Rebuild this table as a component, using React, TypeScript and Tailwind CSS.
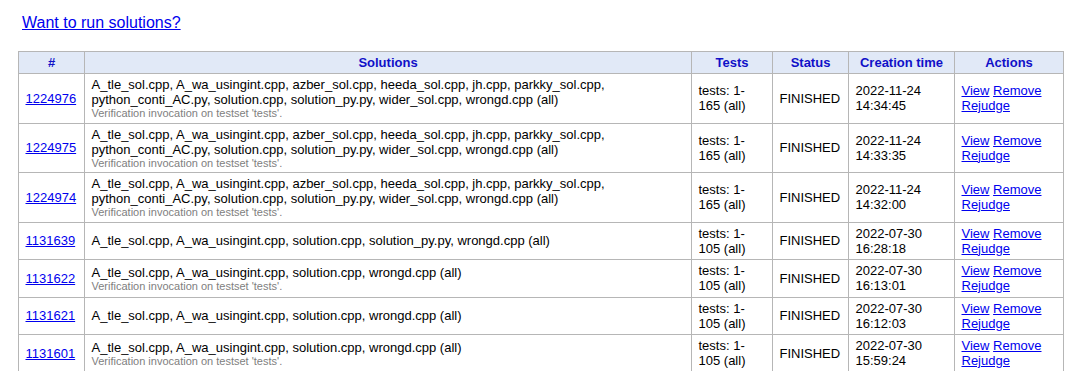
import React from 'react';

interface Run {
  id: string;
  solutions: string;
  note: boolean;
  tests: string;
  date: string;
  time: string;
}

const all11 =
  'A_tle_sol.cpp, A_wa_usingint.cpp, azber_sol.cpp, heeda_sol.cpp, jh.cpp, parkky_sol.cpp, python_conti_AC.py, solution.cpp, solution_py.py, wider_sol.cpp, wrongd.cpp (all)';

const runs: Run[] = [
  { id: '1224976', solutions: all11, note: true, tests: 'tests: 1-165 (all)', date: '2022-11-24', time: '14:34:45' },
  { id: '1224975', solutions: all11, note: true, tests: 'tests: 1-165 (all)', date: '2022-11-24', time: '14:33:35' },
  { id: '1224974', solutions: all11, note: true, tests: 'tests: 1-165 (all)', date: '2022-11-24', time: '14:32:00' },
  {
    id: '1131639',
    solutions: 'A_tle_sol.cpp, A_wa_usingint.cpp, solution.cpp, solution_py.py, wrongd.cpp (all)',
    note: false,
    tests: 'tests: 1-105 (all)',
    date: '2022-07-30',
    time: '16:28:18',
  },
  { id: '1131622', solutions: 'A_tle_sol.cpp, A_wa_usingint.cpp, solution.cpp, wrongd.cpp (all)', note: true, tests: 'tests: 1-105 (all)', date: '2022-07-30', time: '16:13:01' },
  { id: '1131621', solutions: 'A_tle_sol.cpp, A_wa_usingint.cpp, solution.cpp, wrongd.cpp (all)', note: false, tests: 'tests: 1-105 (all)', date: '2022-07-30', time: '16:12:03' },
  { id: '1131601', solutions: 'A_tle_sol.cpp, A_wa_usingint.cpp, solution.cpp, wrongd.cpp (all)', note: true, tests: 'tests: 1-105 (all)', date: '2022-07-30', time: '15:59:24' },
];

const th = 'border border-[#b6b6b6] px-[6.5px] py-[3px] text-center font-bold text-[#1010c8]';
const td = 'border border-[#b6b6b6] px-[6.5px] py-[3.25px] align-middle text-left';
const link = 'text-[#0000ee] underline';

export default function App() {
  return (
    <div className="min-h-[371px] bg-white px-[18px] text-[13px] leading-[normal] text-black" style={{ fontFamily: '"Liberation Sans", Arial, sans-serif' }}>
      <div className="pl-1 pt-[14px] pb-[19px] text-[16px] leading-[normal]">
        <a href="#" className={link}>
          Want to run solutions?
        </a>
      </div>
      <table className="w-full table-fixed border-collapse">
        <colgroup>
          <col className="w-[66px]" />
          <col />
          <col className="w-[81px]" />
          <col className="w-[76px]" />
          <col className="w-[106px]" />
          <col className="w-[109px]" />
        </colgroup>
        <thead>
          <tr className="bg-[#e1e9f7]">
            <th className={th}>#</th>
            <th className={th}>Solutions</th>
            <th className={th}>Tests</th>
            <th className={th}>Status</th>
            <th className={th}>Creation time</th>
            <th className={th}>Actions</th>
          </tr>
        </thead>
        <tbody>
          {runs.map(r => (
            <tr key={r.id}>
              <td className={td}>
                <a href="#" className={link}>
                  {r.id}
                </a>
              </td>
              <td className={td}>
                <div>{r.solutions}</div>
                {r.note && <div className="text-[11px] text-[#808080]">Verification invocation on testset 'tests'.</div>}
              </td>
              <td className={td}>{r.tests}</td>
              <td className={td}>FINISHED</td>
              <td className={td}>
                {r.date} {r.time}
              </td>
              <td className={td}>
                <a href="#" className={link}>View</a>{' '}
                <a href="#" className={link}>Remove</a>{' '}
                <a href="#" className={link}>Rejudge</a>
              </td>
            </tr>
          ))}
        </tbody>
      </table>
    </div>
  );
}
